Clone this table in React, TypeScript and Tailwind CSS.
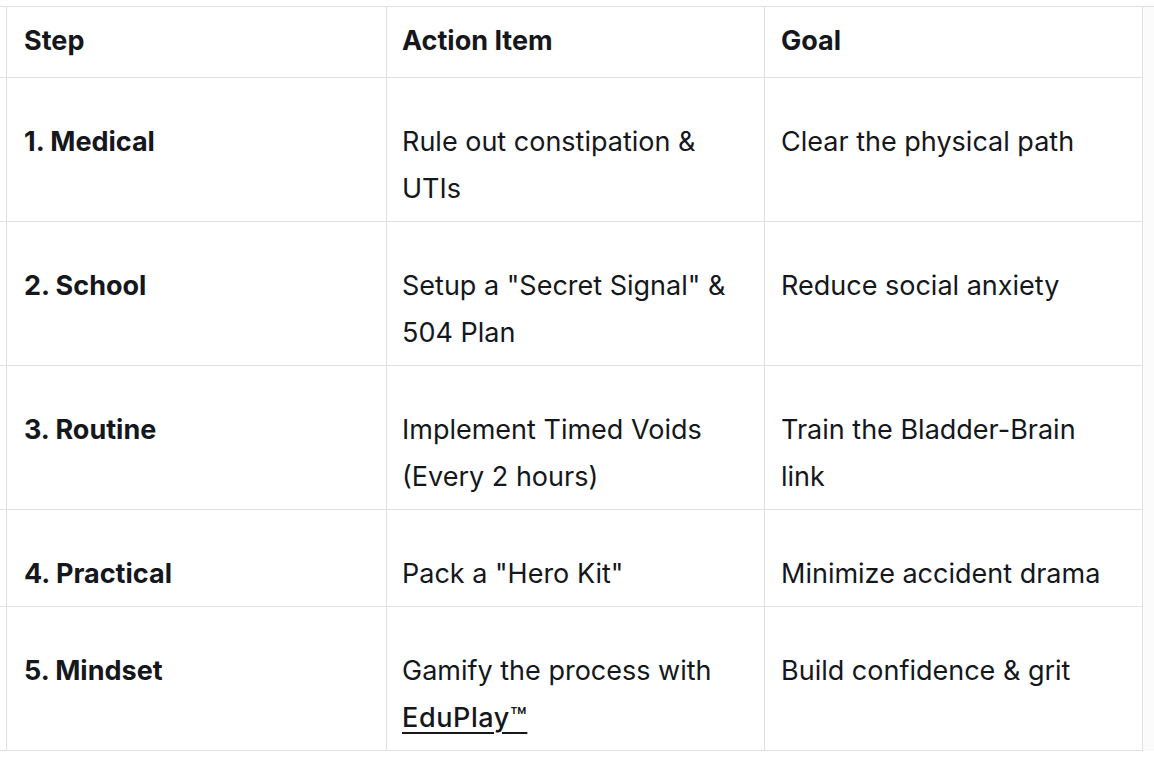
import React from "react";

type Row = {
  step: string;
  action: React.ReactNode;
  goal: string;
};

const rows: Row[] = [
  {
    step: "1. Medical",
    action: "Rule out constipation & UTIs",
    goal: "Clear the physical path",
  },
  {
    step: "2. School",
    action: 'Setup a "Secret Signal" & 504 Plan',
    goal: "Reduce social anxiety",
  },
  {
    step: "3. Routine",
    action: "Implement Timed Voids (Every 2 hours)",
    goal: "Train the Bladder-Brain link",
  },
  {
    step: "4. Practical",
    action: 'Pack a "Hero Kit"',
    goal: "Minimize accident drama",
  },
  {
    step: "5. Mindset",
    action: (
      <>
        Gamify the process with{" "}
        <a
          href="#"
          className="font-medium tracking-[0.6px] underline decoration-2 underline-offset-[5px]"
        >
          EduPlay™
        </a>
      </>
    ),
    goal: "Build confidence & grit",
  },
];

const line = "border-r border-[#dfdfe4] pr-[16px]";

const App = () => {
  return (
    <div
      className="w-[1154px] h-[758px] bg-white text-[#15171c] overflow-hidden"
      style={{ fontFamily: "Inter, 'Noto Sans', sans-serif" }}
    >
      <div className="h-[6px]" />
      <div className="flex border-t border-[#dfdfe4]">
        <div className="w-[1143px] shrink-0">
          <div className="flex border-b border-[#dfdfe4] text-[27px] leading-[48px] font-bold">
            <div className="w-[7px] shrink-0 border-r border-[#dfdfe4]" />
            <div className={`w-[380px] shrink-0 pt-[10px] pb-[12px] pl-[17px] ${line}`}>Step</div>
            <div className={`w-[378px] shrink-0 pt-[10px] pb-[12px] pl-[15px] ${line}`}>Action Item</div>
            <div className={`w-[378px] shrink-0 pt-[10px] pb-[12px] pl-[16px] ${line}`}>Goal</div>
          </div>
          {rows.map((row) => (
            <div
              key={row.step}
              className="flex border-b border-[#dfdfe4] text-[27px] leading-[47px]"
            >
              <div className="w-[7px] shrink-0 border-r border-[#dfdfe4]" />
              <div className={`w-[380px] shrink-0 pt-[40px] pb-[9px] pl-[17px] font-bold ${line}`}>
                {row.step}
              </div>
              <div className={`w-[378px] shrink-0 pt-[40px] pb-[9px] pl-[15px] ${line}`}>
                {row.action}
              </div>
              <div className={`w-[378px] shrink-0 pt-[40px] pb-[9px] pl-[16px] ${line}`}>
                {row.goal}
              </div>
            </div>
          ))}
        </div>
        <div className="flex-1 bg-[#fbfbfc]" />
      </div>
    </div>
  );
};

export default App;
